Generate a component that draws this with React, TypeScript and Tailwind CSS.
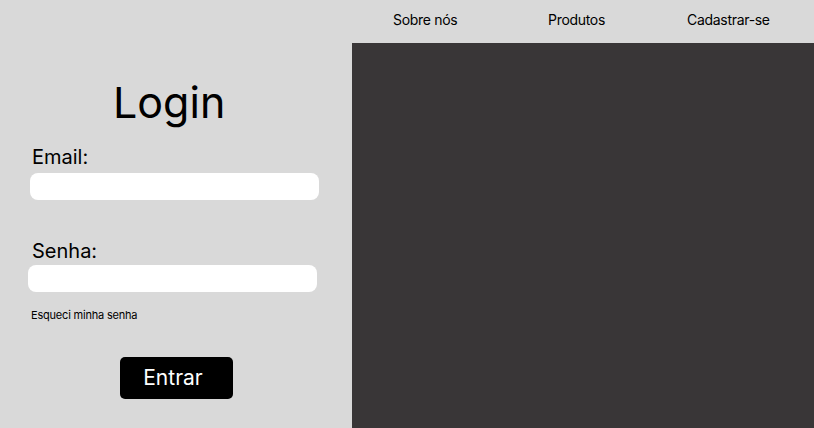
import React from "react";

export default function App() {
  return (
    <div
      className="w-[814px] h-[428px] bg-[#d9d9d9] flex flex-col overflow-hidden"
      style={{ fontFamily: "Inter, 'Noto Sans', sans-serif" }}
    >
      <header className="h-[43px] flex items-center text-[14px] text-black shrink-0 tracking-[-0.3px]">
        <nav className="flex items-center pl-[393px] pb-[4px]">
          <span className="w-[155px]">Sobre nós</span>
          <span className="w-[139px]">Produtos</span>
          <span>Cadastrar-se</span>
        </nav>
      </header>
      <div className="flex flex-1">
        <section className="w-[352px] flex flex-col">
          <h1 className="text-[43px] leading-none text-black pl-[113px] mt-[38px]">Login</h1>
          <label className="text-[20px] leading-none text-black pl-[32px] mt-[23px]">Email:</label>
          <div className="ml-[30px] mt-[6px] w-[289px] h-[27px] bg-white rounded-[8px]" />
          <label className="text-[20px] leading-none text-black pl-[32px] mt-[41px]">Senha:</label>
          <div className="ml-[28px] mt-[4px] w-[289px] h-[27px] bg-white rounded-[8px]" />
          <a className="text-[11px] leading-none text-black pl-[31px] mt-[18px] tracking-[-0.2px]">Esqueci minha senha</a>
          <button className="ml-[120px] mt-[36px] w-[113px] h-[42px] bg-black text-white rounded-[5px] text-[21px] flex items-center justify-center pr-[7px] pb-[1px]">
            Entrar
          </button>
        </section>
        <section className="flex-1 bg-[#393637]" />
      </div>
    </div>
  );
}
